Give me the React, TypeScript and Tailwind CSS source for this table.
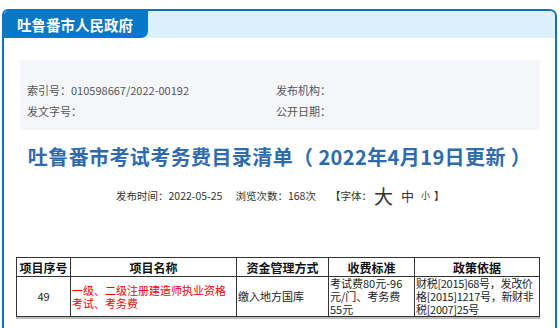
export default function App() {
  const font = { fontFamily: '"Noto Sans CJK SC", "Noto Sans", sans-serif' };
  return (
    <div className="w-[560px] h-[328px] overflow-hidden bg-white pt-[9px] pl-[2px]" style={font}>
      <div className="w-[555px] h-[340px] border-x-2 border-t-2 border-[#0f72bc] rounded-tr-[7px] rounded-tl-[6px] overflow-hidden">
        <div className="flex h-[27px] bg-[#dbf0fd]">
          <div className="w-[144px] h-full bg-[#0777c7] rounded-br-[7px] flex items-center pl-[13px] text-white font-bold text-[14.5px]">
            吐鲁番市人民政府
          </div>
        </div>
        <div className="mt-[22px] ml-[16px] w-[520px] h-[70px] bg-[#f5f6fa] pt-[20px] pl-[7px] text-[11px] text-[#555] leading-[21px]">
          <div className="flex">
            <div className="w-[249px]">索引号：010598667/2022-00192</div>
            <div>发布机构：</div>
          </div>
          <div className="flex">
            <div className="w-[249px]">发文字号：</div>
            <div>公开日期：</div>
          </div>
        </div>
        <div className="mt-[14px] text-center text-[20px] font-bold text-[#2d6aae] leading-[26px] tracking-[0.4px]">
          吐鲁番市考试考务费目录清单（ 2022年4月19日更新 ）
        </div>
        <div className="mt-[16px] flex items-center pl-[112px] text-[10.5px] text-[#333] leading-[20px] whitespace-nowrap">
          <span>发布时间：2022-05-25</span>
          <span className="ml-[13px]">浏览次数：168次</span>
          <span className="ml-[14px]">【字体：</span>
          <span className="text-[19px] ml-[2px] leading-[20px]">大</span>
          <span className="text-[13px] ml-[8px]">中</span>
          <span className="text-[9px] ml-[7px]">小</span>
          <span className="ml-[4px]">】</span>
        </div>
        <div className="mt-[51px] ml-[12px]">
          <table className="border-collapse text-[11px] leading-[13px] shadow-[0_2px_0_#bbb]">
            <thead>
              <tr className="h-[19px]">
                <th className="w-[54px] border border-[#333] font-bold text-[12px] text-[#111]">项目序号</th>
                <th className="w-[166px] border border-[#333] font-bold text-[12px] text-[#111]">项目名称</th>
                <th className="w-[92px] border border-[#333] font-bold text-[12px] text-[#111]">资金管理方式</th>
                <th className="w-[86px] border border-[#333] font-bold text-[12px] text-[#111]">收费标准</th>
                <th className="w-[125px] border border-[#333] font-bold text-[12px] text-[#111]">政策依据</th>
              </tr>
            </thead>
            <tbody>
              <tr className="h-[39px]">
                <td className="border border-[#333] text-center text-[#222]">49</td>
                <td className="border border-[#333] text-[#ff0000] px-[1px] align-middle whitespace-nowrap">一级、二级注册建造师执业资格<br />考试、考务费</td>
                <td className="border border-[#333] text-[#222] px-[1px]">缴入地方国库</td>
                <td className="border border-[#333] text-[#222] px-[1px] align-top whitespace-nowrap">考试费80元-96<br />元/门、考务费<br />55元</td>
                <td className="border border-[#333] text-[#222] px-[1px] align-top whitespace-nowrap tracking-[-0.3px]">财税[2015]68号，发改价<br />格[2015]1217号，新财非<br />税[2007]25号</td>
              </tr>
            </tbody>
          </table>
        </div>
      </div>
    </div>
  );
}
